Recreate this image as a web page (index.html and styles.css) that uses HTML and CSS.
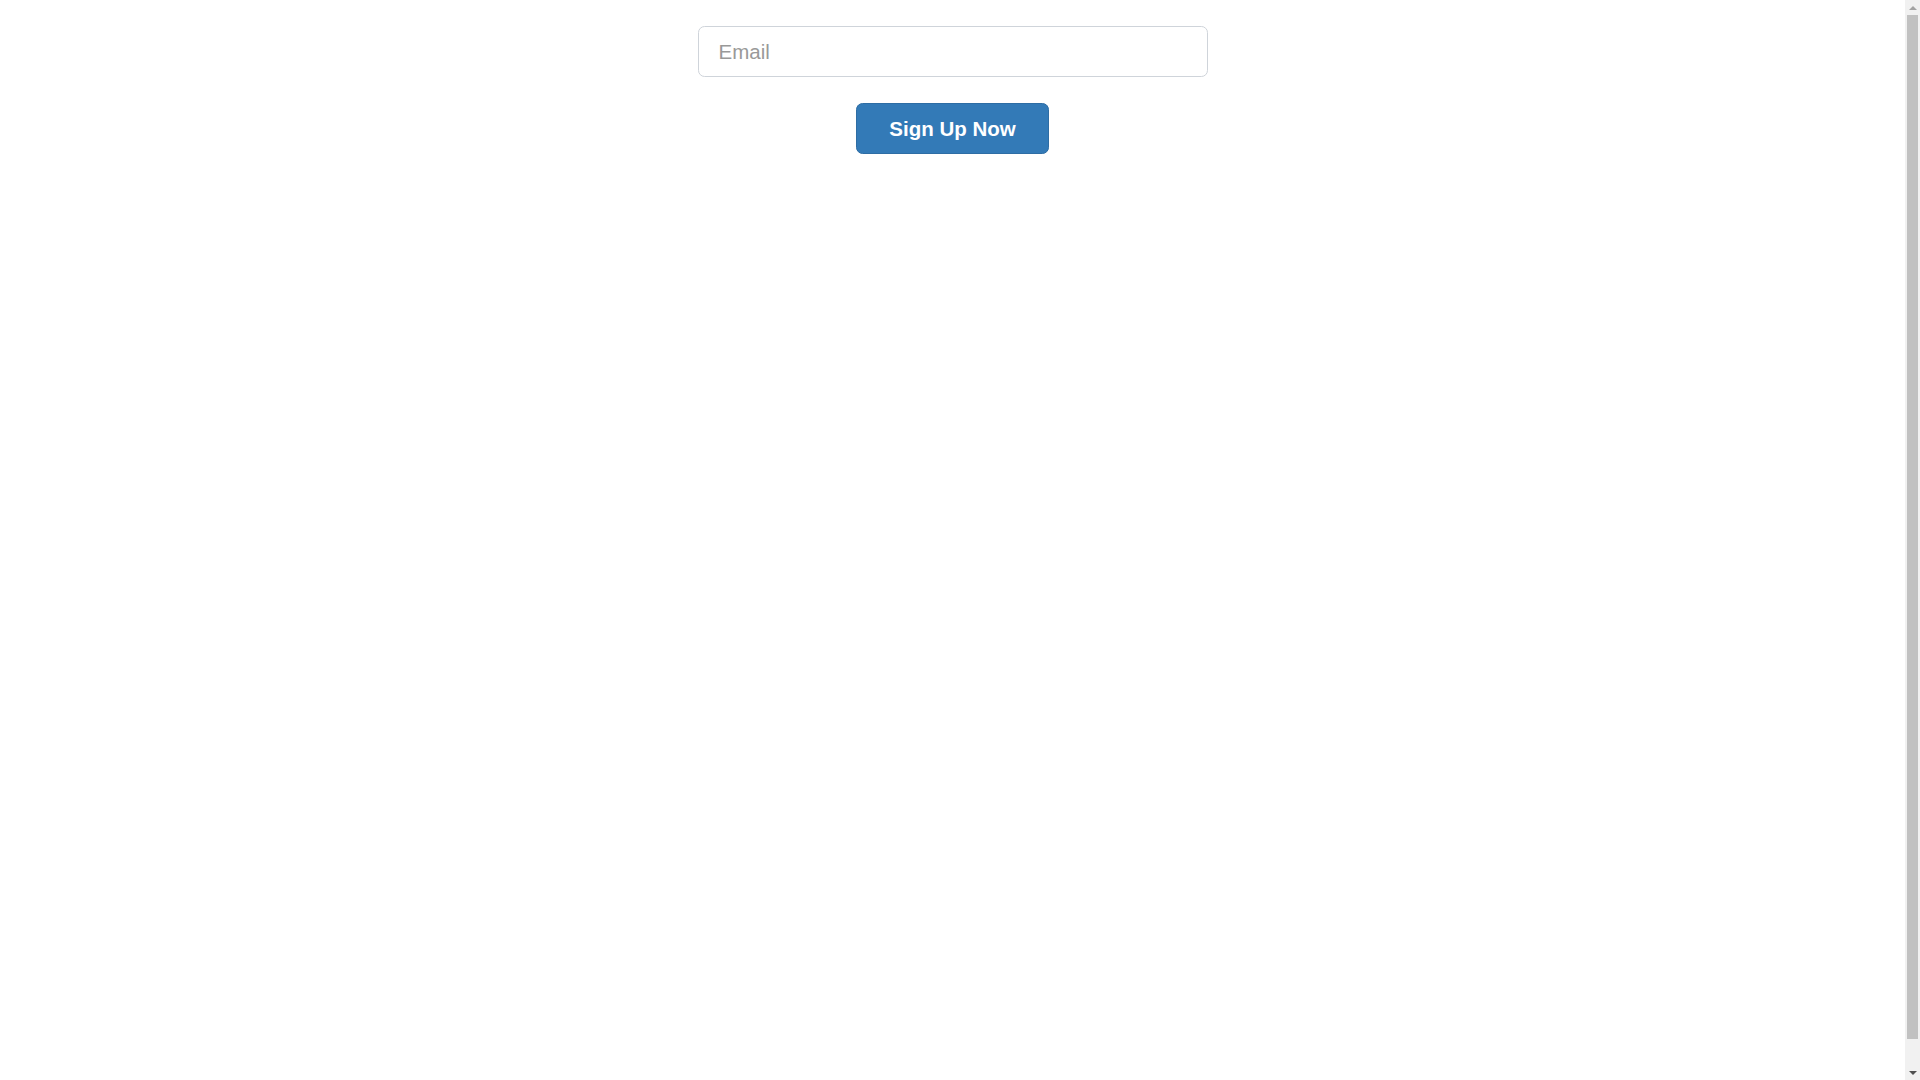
FILE: index.html
```html
<!DOCTYPE html>
<html>
<head>
<meta charset="utf-8">
<link rel="stylesheet" href="styles.css">
</head>
<body>
<form class="signup">
  <input class="email" type="email" placeholder="Email">
  <button class="btn" type="button">Sign Up Now</button>
</form>
<div class="scrollbar" aria-hidden="true">
  <div class="arrow up"></div>
  <div class="track"><div class="thumb"></div></div>
  <div class="arrow down"></div>
</div>
</body>
</html>
```
FILE: styles.css
```css
html, body {
  margin: 0;
  padding: 0;
  background: #fff;
}
body {
  min-height: 1107px;
  padding-right: 15px;
  font-family: "Liberation Sans", Arial, sans-serif;
}
.signup {
  display: flex;
  flex-direction: column;
  align-items: center;
  padding-top: 26px;
  gap: 26px;
}
.email {
  box-sizing: border-box;
  width: 510px;
  height: 51px;
  padding: 0 20px;
  font-family: "Liberation Sans", Arial, sans-serif;
  font-size: 20.5px;
  color: #555;
  border: 1px solid #cfd4da;
  border-radius: 6.6px;
  box-shadow: none;
  outline: none;
}
.email::placeholder {
  color: #999;
}
.btn {
  box-sizing: border-box;
  width: 193px;
  height: 51px;
  padding: 0;
  font-family: "Liberation Sans", Arial, sans-serif;
  font-size: 20.5px;
  font-weight: bold;
  color: #fff;
  background: #337ab7;
  border: 1px solid #2e6da4;
  border-radius: 6.6px;
  cursor: pointer;
}
.scrollbar {
  position: fixed;
  top: 0;
  right: 0;
  width: 15px;
  height: 100vh;
  background: #f1f1f1;
  display: flex;
  flex-direction: column;
}
.arrow {
  height: 15px;
  display: flex;
  align-items: center;
  justify-content: center;
}
.arrow::before {
  content: "";
  width: 0;
  height: 0;
  border-left: 4px solid transparent;
  border-right: 4px solid transparent;
}
.arrow.up::before {
  border-bottom: 4px solid #a3a3a3;
}
.arrow.down::before {
  border-top: 4px solid #505050;
}
.track {
  flex: 1;
  padding: 0 2px;
}
.thumb {
  height: 1024px;
  background: #c1c1c1;
}
```
